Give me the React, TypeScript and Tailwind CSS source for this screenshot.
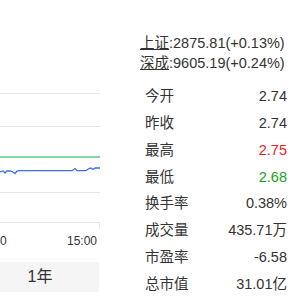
const stats = [
  { label: '今开', value: '2.74', color: 'text-[#333]' },
  { label: '昨收', value: '2.74', color: 'text-[#333]' },
  { label: '最高', value: '2.75', color: 'text-[#f21b1b]' },
  { label: '最低', value: '2.68', color: 'text-[#1aa11a]' },
  { label: '换手率', value: '0.38%', color: 'text-[#333]' },
  { label: '成交量', value: '435.71万', color: 'text-[#333]' },
  { label: '市盈率', value: '-6.58', color: 'text-[#333]' },
  { label: '总市值', value: '31.01亿', color: 'text-[#333]' },
];

const Chart = () => (
  <svg width="100" height="231" viewBox="0 0 100 231" className="block">
    <line x1="0" y1="93.5" x2="100" y2="93.5" stroke="#e6e6e6" />
    <line x1="0" y1="126.5" x2="100" y2="126.5" stroke="#e6e6e6" />
    <line x1="0" y1="192.5" x2="100" y2="192.5" stroke="#e6e6e6" />
    <line x1="0" y1="222.5" x2="100" y2="222.5" stroke="#e6e6e6" />
    <line x1="99.5" y1="222" x2="99.5" y2="229" stroke="#e6e6e6" />
    <line x1="0" y1="157" x2="100" y2="157" stroke="#5ccb80" strokeWidth="1.5" />
    <polyline
      fill="none"
      stroke="#3d6ef3"
      strokeWidth="1.3"
      points="0,172 3,171 5,173 7,171 10,171 13,172 15,173.5 17,171 20,170.7 72,170.7 75,168.5 77,170.7 86,170.7 89,168.5 91,168 93,169.5 95,168 100,168"
    />
  </svg>
);

const App = () => {
  return (
    <div className="flex h-[300px] w-[300px] overflow-hidden bg-white font-['Liberation_Sans','Noto_Sans_CJK_SC',sans-serif] text-[#333]">
      <div className="w-[100px] shrink-0 overflow-hidden">
        <Chart />
        <div className="flex h-[20px] items-center justify-between pr-[3px] text-[12px] text-[#333]">
          <span>0</span>
          <span>15:00</span>
        </div>
        <div className="mt-[11px] -ml-[19px] flex h-[30px] w-[118px] items-center justify-center bg-[#f5f5f5] text-[16px]">
          1年
        </div>
      </div>
      <div className="ml-[40px] w-[147px] shrink-0 pt-[33px] text-[14.5px]">
        <div className="whitespace-nowrap leading-[20px]">
          <span className="underline underline-offset-1">上证</span>:2875.81(+0.13%)
        </div>
        <div className="whitespace-nowrap leading-[20px]">
          <span className="underline underline-offset-1">深成</span>:9605.19(+0.24%)
        </div>
        <div className="mt-[10.6px]">
          {stats.map((s) => (
            <div key={s.label} className="flex h-[26.8px] items-center justify-between pl-[5px]">
              <span>{s.label}</span>
              <span className={s.color}>{s.value}</span>
            </div>
          ))}
        </div>
      </div>
    </div>
  );
};

export default App;
